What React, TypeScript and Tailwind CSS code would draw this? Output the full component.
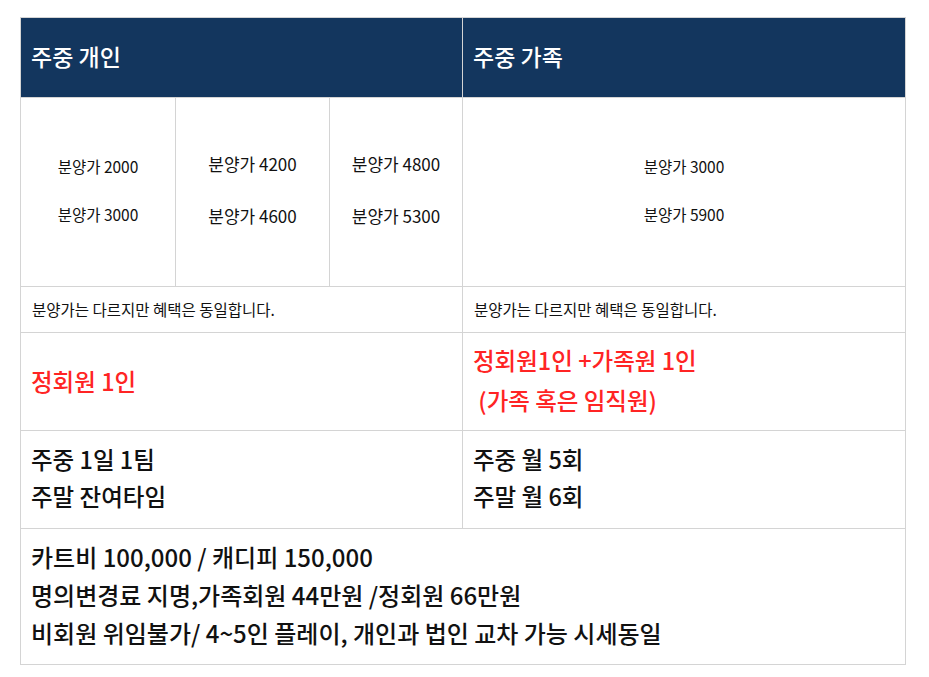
const font = { fontFamily: '"Noto Sans CJK KR", "Noto Sans", sans-serif' };

function PriceCol({ items, wide, className }: { items: string[]; wide?: boolean; className: string }) {
  return (
    <div className={`flex flex-col items-center justify-center pb-[4px] ${wide ? "gap-[32px] text-[17px]" : "gap-[28px] text-[15.5px]"} ${className}`}>
      {items.map((t) => (
        <div key={t} className="leading-[20px]">
          {t}
        </div>
      ))}
    </div>
  );
}

export default function App() {
  return (
    <div className="min-h-screen bg-white pt-[17px] pl-[20px] text-[#111]" style={font}>
      <div className="w-[886px] border border-[#d4d4d4]">
        {/* header */}
        <div className="flex h-[80px] border-b border-[#d4d4d4] bg-[#13365e] text-[23px] font-medium text-white">
          <div className="flex w-[442px] items-center border-r border-[#d4d4d4] pl-[10px] pb-[3px]">주중 개인</div>
          <div className="flex flex-1 items-center pl-[10px] pb-[3px]">주중 가족</div>
        </div>

        {/* prices */}
        <div className="flex h-[189px] border-b border-[#d4d4d4]">
          <div className="flex w-[442px] border-r border-[#d4d4d4]">
            <PriceCol items={["분양가 2000", "분양가 3000"]} className="w-[155px] border-r border-[#d4d4d4]" />
            <PriceCol items={["분양가 4200", "분양가 4600"]} wide className="w-[154px] border-r border-[#d4d4d4]" />
            <PriceCol items={["분양가 4800", "분양가 5300"]} wide className="flex-1" />
          </div>
          <PriceCol items={["분양가 3000", "분양가 5900"]} className="flex-1" />
        </div>

        {/* note */}
        <div className="flex h-[46px] border-b border-[#d4d4d4] text-[15.5px]">
          <div className="flex w-[442px] items-center border-r border-[#d4d4d4] pl-[11px]">
            분양가는 다르지만 혜택은 동일합니다.
          </div>
          <div className="flex flex-1 items-center pl-[11px]">분양가는 다르지만 혜택은 동일합니다.</div>
        </div>

        {/* members */}
        <div className="flex h-[98px] border-b border-[#d4d4d4] text-[23.5px] font-medium text-[#ff2424]">
          <div className="flex w-[442px] items-center border-r border-[#d4d4d4] pl-[10px]">정회원 1인</div>
          <div className="flex flex-1 flex-col justify-center pl-[10px] pb-[4px] leading-[40px]">
            <div>정회원1인 +가족원 1인</div>
            <div className="whitespace-pre"> (가족 혹은 임직원)</div>
          </div>
        </div>

        {/* schedule */}
        <div className="flex h-[98px] border-b border-[#d4d4d4] text-[23.5px] font-medium leading-[37px]">
          <div className="flex w-[442px] flex-col justify-center border-r border-[#d4d4d4] pl-[10px] pb-[4px]">
            <div>주중 1일 1팀</div>
            <div>주말 잔여타임</div>
          </div>
          <div className="flex flex-1 flex-col justify-center pl-[10px] pb-[4px]">
            <div>주중 월 5회</div>
            <div>주말 월 6회</div>
          </div>
        </div>

        {/* footer */}
        <div className="flex h-[135px] flex-col justify-center pl-[10px] pb-[4px] text-[24px] font-medium leading-[38px]">
          <div>카트비 100,000 / 캐디피 150,000</div>
          <div>명의변경료 지명,가족회원 44만원 /정회원 66만원</div>
          <div>비회원 위임불가/ 4~5인 플레이, 개인과 법인 교차 가능 시세동일</div>
        </div>
      </div>
    </div>
  );
}
